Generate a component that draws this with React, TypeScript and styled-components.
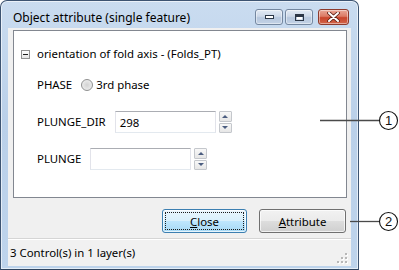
import React from 'react';
import styled, { createGlobalStyle } from 'styled-components';

const GlobalStyle = createGlobalStyle`
    html,
    body {
        margin: 0;
        padding: 0;
        background: #ffffff;
    }

    body {
        font-family: 'Noto Sans', 'Open Sans', sans-serif;
        font-size: 11.4px;
        color: #000000;
    }
`;

const Page = styled.div`
    position: relative;
    width: 399px;
    height: 270px;
    overflow: hidden;
    background: #ffffff;
`;

const Window = styled.div`
    display: flex;
    flex-direction: column;
    box-sizing: border-box;
    width: 359px;
    height: 270px;
    padding: 0 7px 3px;

    background: linear-gradient(180deg, #cadcf0 0%, #bad0e9 45%, #bed4ec 100%);
    border: 1px solid #3d5472;
    border-bottom-color: #2f4560;
    border-radius: 7px 7px 0 0;
    box-shadow: inset 0 0 0 1px rgba(255, 255, 255, 0.6);
`;

const TitleBar = styled.div`
    display: flex;
    align-items: flex-start;
    height: 27px;
    padding-left: 5px;
`;

const Title = styled.span`
    margin-top: 9px;
    font-size: 12px;
    line-height: 16px;
    color: #000000;
`;

const CaptionButtons = styled.div`
    display: flex;
    margin: 8px 2px 0 auto;
`;

const CaptionButton = styled.div<{ $kind: 'min' | 'max' | 'close' }>`
    display: flex;
    align-items: center;
    justify-content: center;
    box-sizing: border-box;
    width: ${({ $kind }) => ($kind === 'close' ? 31 : 28)}px;
    height: 16px;
    margin-left: ${({ $kind }) => ($kind === 'close' ? 5 : $kind === 'max' ? 2 : 0)}px;

    border: 1px solid ${({ $kind }) => ($kind === 'close' ? '#8d3a2c' : '#7487a0')};
    border-radius: 3px;
    background: ${({ $kind }) =>
        $kind === 'close'
            ? 'linear-gradient(180deg, #e9a797 0%, #dc7a65 45%, #c9442b 55%, #d1654a 100%)'
            : 'linear-gradient(180deg, #e2eaf4 0%, #ccd8e8 45%, #b6c7dd 55%, #c3d2e6 100%)'};
    box-shadow: inset 0 0 0 1px rgba(255, 255, 255, 0.45);
`;

const Client = styled.div`
    display: flex;
    flex: 1;
    flex-direction: column;
    background: #f0f0f0;
`;

const Body = styled.div`
    display: flex;
    flex-direction: column;
    padding: 2px 4px 0 5px;
`;

const Panel = styled.div`
    display: flex;
    flex-direction: column;
    box-sizing: border-box;
    height: 168px;
    padding: 0 7px;

    background: #ffffff;
    border: 1px solid #828790;
`;

const TreeRow = styled.div`
    display: flex;
    align-items: center;
    gap: 7px;
    height: 16px;
    margin-top: 15px;
`;

const Expander = styled.span`
    position: relative;
    box-sizing: border-box;
    width: 9px;
    height: 9px;

    background: linear-gradient(180deg, #ffffff 0%, #e4e4e4 100%);
    border: 1px solid #919191;

    &::after {
        content: '';
        position: absolute;
        left: 1px;
        top: 3px;
        width: 5px;
        height: 1px;
        background: #1e1e1e;
    }
`;

const FieldRow = styled.div<{ $top: number }>`
    display: flex;
    align-items: center;
    gap: 9px;
    height: 22px;
    margin-top: ${({ $top }) => $top}px;
    padding-left: 16px;
`;

const Label = styled.span`
    line-height: 16px;
`;

const RadioGroup = styled.span`
    display: flex;
    align-items: center;
    gap: 3px;
`;

const Radio = styled.span`
    box-sizing: border-box;
    width: 12px;
    height: 12px;

    border: 1px solid #8f9090;
    border-radius: 50%;
    background: radial-gradient(circle at 50% 50%, #d2d2d2 0%, #e2e2e2 45%, #f4f4f4 100%);
`;

const InputGroup = styled.span`
    display: flex;
    align-items: stretch;
    gap: 3px;
    height: 22px;
`;

const TextBox = styled.span`
    display: flex;
    align-items: center;
    box-sizing: border-box;
    width: 101px;
    padding-left: 4px;

    background: #ffffff;
    border: 1px solid #e2e3ea;
    border-top-color: #abadb3;
    border-bottom-color: #e3e9ef;
`;

const Spinner = styled.span`
    display: flex;
    flex-direction: column;
    gap: 1px;
    width: 13px;
`;

const SpinHalf = styled.span<{ $dir: 'up' | 'down' }>`
    display: flex;
    flex: 1;
    align-items: center;
    justify-content: center;
    box-sizing: border-box;

    background: linear-gradient(180deg, #f8f8f8 0%, #e6e6e6 100%);
    border: 1px solid #c4c7cc;
    border-radius: 1px;

    &::after {
        content: '';
        width: 0;
        height: 0;
        border-left: 3px solid transparent;
        border-right: 3px solid transparent;
        ${({ $dir }) =>
            $dir === 'up' ? 'border-bottom: 3px solid #4b5d80;' : 'border-top: 3px solid #4b5d80;'}
    }
`;

const ButtonRow = styled.div`
    display: flex;
    justify-content: flex-end;
    gap: 12px;
    margin-top: 11px;
    padding-right: 1px;
`;

const Button = styled.div<{ $default?: boolean; $width: number }>`
    position: relative;
    display: flex;
    align-items: center;
    justify-content: center;
    box-sizing: border-box;
    width: ${({ $width }) => $width}px;
    height: 24px;

    border: 1px solid ${({ $default }) => ($default ? '#3c7fb1' : '#707070')};
    border-radius: 3px;
    background: ${({ $default }) =>
        $default
            ? 'linear-gradient(180deg, #eaf6fd 0%, #d9f0fc 48%, #bee6fd 52%, #a7d9f5 100%)'
            : 'linear-gradient(180deg, #f2f2f2 0%, #ebebeb 48%, #dddddd 52%, #cfcfcf 100%)'};
    box-shadow: inset 0 0 0 1px rgba(255, 255, 255, 0.7);

    ${({ $default }) =>
        $default &&
        `
            &::after {
                content: '';
                position: absolute;
                inset: 2px;
                border: 1px dotted #1b1b1b;
                border-radius: 1px;
            }
        `}
`;

const AccessKey = styled.span`
    text-decoration: underline;
`;

const StatusBar = styled.div`
    display: flex;
    flex: 1;
    align-items: center;
    margin-top: 5px;
    padding: 0 2px 0 2px;

    background: #f1f1f1;
    border-top: 1px solid #d5d5d5;
    box-shadow: inset 0 1px 0 #ffffff;
`;

const StatusText = styled.span`
    line-height: 16px;
`;

const Grip = styled.svg`
    align-self: flex-end;
    margin: 0 1px 2px auto;
`;

const Callout = styled.svg`
    position: absolute;
    overflow: visible;
`;

const CalloutMark: React.FC<{ left: number; top: number; line: number; label: string }> = ({
    left,
    top,
    line,
    label,
}) => (
    <Callout width={line + 20} height={21} style={{ left, top }}>
        <line x1={0} y1={10.5} x2={line} y2={10.5} stroke="#4a4a4a" strokeWidth={1.3} />
        <circle cx={line + 9.5} cy={10.5} r={9} fill="#ffffff" stroke="#111111" strokeWidth={1.1} />
        <text
            x={line + 9.5}
            y={15}
            textAnchor="middle"
            fontFamily="'Liberation Sans', Arial, sans-serif"
            fontSize={13}
            fill="#111111"
        >
            {label}
        </text>
    </Callout>
);

const MinGlyph = () => (
    <svg width="11" height="6" viewBox="0 0 11 6">
        <rect x="1.5" y="1.5" width="8" height="3" fill="#ffffff" stroke="#2b3646" />
    </svg>
);

const MaxGlyph = () => (
    <svg width="11" height="9" viewBox="0 0 11 9">
        <rect x="1.5" y="1.5" width="8" height="6" fill="none" stroke="#2b3646" />
        <rect x="2" y="2" width="7" height="2" fill="#2b3646" />
        <rect x="3" y="4" width="5" height="2.5" fill="#ffffff" />
    </svg>
);

const CloseGlyph = () => (
    <svg width="13" height="10" viewBox="0 0 13 10">
        <path d="M2 1 L11 9 M11 1 L2 9" stroke="#5a1e14" strokeWidth={3.6} strokeLinecap="round" />
        <path d="M2 1 L11 9 M11 1 L2 9" stroke="#ffffff" strokeWidth={2} strokeLinecap="round" />
    </svg>
);

const GripDots = () => (
    <Grip width="11" height="11" viewBox="0 0 11 11">
        {[
            [8, 0],
            [8, 4],
            [4, 4],
            [8, 8],
            [4, 8],
            [0, 8],
        ].map(([x, y], i) => (
            <g key={i}>
                <rect x={x + 1} y={y + 1} width={2} height={2} fill="#ffffff" />
                <rect x={x} y={y} width={2} height={2} fill="#b8b8b8" />
            </g>
        ))}
    </Grip>
);

const SpinBox: React.FC<{ value?: string }> = ({ value }) => (
    <InputGroup>
        <TextBox>{value}</TextBox>
        <Spinner>
            <SpinHalf $dir="up" />
            <SpinHalf $dir="down" />
        </Spinner>
    </InputGroup>
);

export default function App() {
    return (
        <Page>
            <GlobalStyle />
            <Window>
                <TitleBar>
                    <Title>Object attribute (single feature)</Title>
                    <CaptionButtons>
                        <CaptionButton $kind="min">
                            <MinGlyph />
                        </CaptionButton>
                        <CaptionButton $kind="max">
                            <MaxGlyph />
                        </CaptionButton>
                        <CaptionButton $kind="close">
                            <CloseGlyph />
                        </CaptionButton>
                    </CaptionButtons>
                </TitleBar>

                <Client>
                    <Body>
                        <Panel>
                            <TreeRow>
                                <Expander />
                                <Label>orientation of fold axis - (Folds_PT)</Label>
                            </TreeRow>

                            <FieldRow $top={12}>
                                <Label>PHASE</Label>
                                <RadioGroup>
                                    <Radio />
                                    <Label>3rd phase</Label>
                                </RadioGroup>
                            </FieldRow>

                            <FieldRow $top={15}>
                                <Label>PLUNGE_DIR</Label>
                                <SpinBox value="298" />
                            </FieldRow>

                            <FieldRow $top={15}>
                                <Label>PLUNGE</Label>
                                <SpinBox />
                            </FieldRow>
                        </Panel>

                        <ButtonRow>
                            <Button $default $width={85}>
                                <span>
                                    <AccessKey>C</AccessKey>lose
                                </span>
                            </Button>
                            <Button $width={87}>
                                <span>
                                    <AccessKey>A</AccessKey>ttribute
                                </span>
                            </Button>
                        </ButtonRow>
                    </Body>

                    <StatusBar>
                        <StatusText>3 Control(s) in 1 layer(s)</StatusText>
                        <GripDots />
                    </StatusBar>
                </Client>
            </Window>

            <CalloutMark left={320} top={110} line={59} label="1" />
            <CalloutMark left={350} top={211} line={29} label="2" />
        </Page>
    );
}
